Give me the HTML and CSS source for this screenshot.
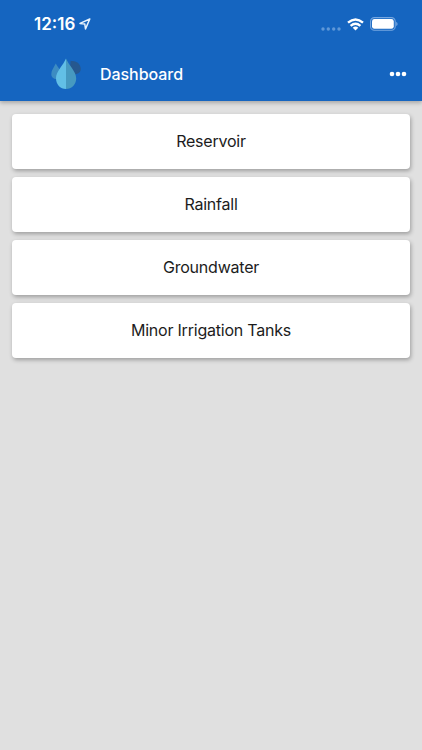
FILE: index.html
```html
<!DOCTYPE html>
<html lang="en">
<head>
    <meta charset="UTF-8">
    <meta name="viewport" content="width=device-width, initial-scale=1.0">
    <title>Dashboard</title>
    <link rel="stylesheet" href="styles.css">
</head>
<body>
    <header class="header">
        <div class="status-bar">
            <span class="time">12:16</span>
            <svg class="location" width="12" height="12" viewBox="0 0 12 12">
                <path d="M10.8 1 L1 5.4 L5.8 6.1 L6.5 10.9 Z" fill="none" stroke="#e6f2fc" stroke-width="1.5" stroke-linejoin="round"/>
            </svg>
            <svg class="signal" width="20" height="4" viewBox="0 0 20 4" fill="#5f98d8">
                <circle cx="2" cy="2" r="1.7"/>
                <circle cx="7.3" cy="2" r="1.7"/>
                <circle cx="12.7" cy="2" r="1.7"/>
                <circle cx="18" cy="2" r="1.7"/>
            </svg>
            <svg class="wifi" width="17" height="13" viewBox="0 0 17 13">
                <g fill="none" stroke="#fff" stroke-width="2.4">
                    <path d="M1 4.7 Q8.5 -1.8 16 4.7"/>
                    <path d="M3.6 7.8 Q8.5 3.6 13.4 7.8"/>
                </g>
                <path d="M5.7 9.7 Q8.5 7.4 11.3 9.7 L8.5 12.5 Z" fill="#fff"/>
            </svg>
            <svg class="battery" width="28" height="14" viewBox="0 0 28 14">
                <rect x="0.6" y="0.6" width="24.6" height="12.6" rx="3.8" fill="none" stroke="#76a7e0" stroke-width="1.1"/>
                <rect x="2" y="2" width="21.8" height="9.8" rx="2.4" fill="#fff"/>
                <path d="M26.2 4.8 Q27.6 5.6 27.6 6.9 Q27.6 8.2 26.2 9 Z" fill="#76a7e0"/>
            </svg>
        </div>
        <div class="toolbar">
            <svg class="logo" width="32" height="32" viewBox="0 0 32 32">
                <path d="M5.8 5.5 C4.2 9 1.3 12.2 1.3 16 C1.3 19.2 3.6 21 6.5 21 C9.5 21 11 19 11 15.8 C11 12 7.4 9 5.8 5.5 Z" fill="#3d8cc2"/>
                <path d="M20.6 2.8 C23.4 3.2 27.2 3.2 29.3 6.4 C31.6 10 31.2 13.8 27.8 15.6 C24.8 17 21.5 15.9 20.4 13.2 C19.2 10 20.6 6.7 20.6 2.8 Z" fill="#26588f"/>
                <path d="M16 0.5 C13 7.6 6 13.6 6 20.2 C6 26.3 10.2 31 16 31 Z" fill="#62bfe6"/>
                <path d="M16 0.5 C19 7.6 26.2 13.6 26.2 20.2 C26.2 26.3 21.8 31 16 31 Z" fill="#4699c0"/>
            </svg>
            <h1 class="title">Dashboard</h1>
            <svg class="more" width="18" height="6" viewBox="0 0 18 6" fill="#fff">
                <circle cx="3" cy="3" r="2.3"/>
                <circle cx="9" cy="3" r="2.3"/>
                <circle cx="15" cy="3" r="2.3"/>
            </svg>
        </div>
    </header>
    <main class="menu">
        <div class="card">Reservoir</div>
        <div class="card">Rainfall</div>
        <div class="card">Groundwater</div>
        <div class="card">Minor Irrigation Tanks</div>
    </main>
</body>
</html>
```

FILE: styles.css
```css
body {
    margin: 0;
    min-height: 100vh;
    background-color: #e0e0e0;
    font-family: Inter, Roboto, sans-serif;
}
.header {
    height: 101px;
    background-color: #1565c0;
    color: white;
    box-shadow: 0 2px 4px rgba(0,0,0,0.25);
}
.status-bar {
    display: flex;
    align-items: center;
    height: 48px;
    padding: 0 24px 0 34px;
}
.time {
    width: 41px;
    font-size: 17px;
    font-weight: 600;
}
.location {
    margin-left: 4px;
}
.signal {
    margin: 9px 6px 0 auto;
}
.wifi {
    margin-right: 6px;
}
.toolbar {
    display: flex;
    align-items: center;
    height: 52px;
    padding: 0 15px 0 50px;
}
.title {
    margin: 0 0 0 18px;
    font-size: 16px;
    font-weight: 500;
    letter-spacing: -0.05px;
}
.more {
    margin-left: auto;
}
.menu {
    display: flex;
    flex-direction: column;
    gap: 8px;
    padding: 12.5px 12px;
}
.card {
    height: 55px;
    line-height: 55px;
    border-radius: 4px;
    background-color: white;
    box-shadow: 1px 2px 4px rgba(0,0,0,0.3);
    color: #1c1c1c;
    font-size: 16px;
    letter-spacing: -0.22px;
    text-align: center;
}
```
